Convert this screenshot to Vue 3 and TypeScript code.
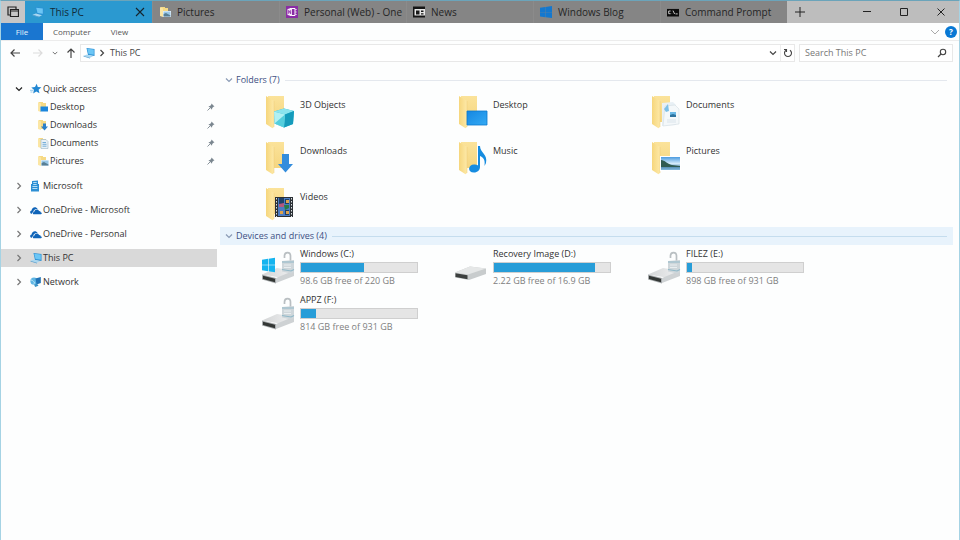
<script setup lang="ts">
import { ref } from 'vue'

interface Tab { id: number; label: string; icon: string }
interface Place { label: string; icon: string; open?: boolean; children?: { label: string; icon: string }[] }
interface Drive { label: string; icon: string; used: number; note: string }

const tabs: Tab[] = [
  { id: 1, label: 'This PC', icon: 'pc' },
  { id: 2, label: 'Pictures', icon: 'mini-pictures' },
  { id: 3, label: 'Personal (Web) - One', icon: 'onenote' },
  { id: 4, label: 'News', icon: 'news' },
  { id: 5, label: 'Windows Blog', icon: 'windows' },
  { id: 6, label: 'Command Prompt', icon: 'cmd' },
]
const activeTab = ref(1)

const places = ref<Place[]>([
  {
    label: 'Quick access', icon: 'star', open: true,
    children: [
      { label: 'Desktop', icon: 'mini-desktop' },
      { label: 'Downloads', icon: 'mini-downloads' },
      { label: 'Documents', icon: 'mini-documents' },
      { label: 'Pictures', icon: 'mini-pictures' },
    ],
  },
  { label: 'Microsoft', icon: 'building' },
  { label: 'OneDrive - Microsoft', icon: 'cloud' },
  { label: 'OneDrive - Personal', icon: 'cloud' },
  { label: 'This PC', icon: 'pc' },
  { label: 'Network', icon: 'network' },
])
const selectedPlace = ref('This PC')

const folders = [
  { label: '3D Objects', icon: 'over-cube' },
  { label: 'Desktop', icon: 'over-desktop' },
  { label: 'Documents', icon: 'over-documents' },
  { label: 'Downloads', icon: 'over-downloads' },
  { label: 'Music', icon: 'over-music' },
  { label: 'Pictures', icon: 'over-pictures' },
  { label: 'Videos', icon: 'over-videos' },
]

const drives: Drive[] = [
  { label: 'Windows (C:)', icon: 'system', used: 54.5, note: '98.6 GB free of 220 GB' },
  { label: 'Recovery Image (D:)', icon: 'plain', used: 87, note: '2.22 GB free of 16.9 GB' },
  { label: 'FILEZ (E:)', icon: 'locked', used: 4, note: '898 GB free of 931 GB' },
  { label: 'APPZ (F:)', icon: 'locked', used: 13, note: '814 GB free of 931 GB' },
]

const search = ref('')
</script>

<template>
  <svg class="sprite" aria-hidden="true">
    <defs>
      <linearGradient id="g-front" x1="0" x2="1"><stop offset="0" stop-color="#f6d67c" /><stop offset="1" stop-color="#fde9a8" /></linearGradient>
      <linearGradient id="g-back" x1="0" x2="0" y1="0" y2="1"><stop offset="0" stop-color="#fbe39a" /><stop offset="1" stop-color="#f5d680" /></linearGradient>
      <linearGradient id="g-blue" x1="0" x2="1" y1="0" y2="1"><stop offset="0" stop-color="#1587e2" /><stop offset="1" stop-color="#34aaf4" /></linearGradient>
      <linearGradient id="g-sky" x1="0" x2="0" y1="0" y2="1"><stop offset="0" stop-color="#4b9be0" /><stop offset=".5" stop-color="#d4ebfa" /><stop offset=".8" stop-color="#5b93b8" /><stop offset="1" stop-color="#86bce0" /></linearGradient>
      <linearGradient id="g-metal" x1="0" x2="1"><stop offset="0" stop-color="#d3d5d6" /><stop offset="1" stop-color="#f0f1f2" /></linearGradient>
    </defs>

    <symbol id="pc" viewBox="0 0 12 12">
      <path d="M3.500 1l8 1v7L5 8z" fill="#2a8fd4" /><path d="M4.200 1.800l6.600.8v5.200l-5.300-.9z" fill="#6cc6f5" />
      <path d="M.5 8.800l3.500-1.300 6 1.700-3 1.600z" fill="#a9d7f1" /><path d="M.5 8.800l6.500 2v.7L.5 9.500z" fill="#5aa2d0" />
    </symbol>
    <symbol id="mini-folder" viewBox="0 0 12 12">
      <path d="M2 1h4v1h3v8H2z" fill="#f6d984" /><path d="M1 1l3 1.400V11L1 10z" fill="#fbe6a4" />
    </symbol>
    <symbol id="mini-desktop" viewBox="0 0 12 12"><use href="#mini-folder" /><path d="M3.500 5.500h7.500v5H3.500z" fill="#1b86dc" /></symbol>
    <symbol id="mini-downloads" viewBox="0 0 12 12"><use href="#mini-folder" /><path d="M6 4.500h3V7.500h2L7.500 11.500 4 7.500h2z" fill="#2a7fca" /></symbol>
    <symbol id="mini-documents" viewBox="0 0 12 12">
      <use href="#mini-folder" /><path d="M4 2.500h5l2 2v7H4z" fill="#e8f1f7" stroke="#9bb5c6" stroke-width=".6" />
      <path d="M5.500 5.500H9M5.500 7.300h4M5.500 9.200h4" stroke="#5a9ed0" stroke-width=".8" />
    </symbol>
    <symbol id="mini-pictures" viewBox="0 0 12 12">
      <use href="#mini-folder" /><path d="M4 5h8v6H4z" fill="#e6f2fa" /><path d="M4.600 5.600h6.800v4.800H4.600z" fill="#9ac8e8" /><path d="M4.600 8l2.400-1 4.400 2.500v.9H4.600z" fill="#587f95" />
    </symbol>
    <symbol id="onenote" viewBox="0 0 12 12">
      <path d="M0 0h12v12H0z" fill="#8a2da5" /><path d="M4 2.500h5v7H4z" fill="none" stroke="#fff" /><path d="M9.500 3.500h1M9.500 6h1M9.500 8.500h1" stroke="#fff" stroke-width="1.200" />
      <path d="M1.500 3L6 2v8L1.500 9z" fill="#f7eafa" /><path d="M2.700 7.800V4.400l2 3.300V4.200" fill="none" stroke="#8a2da5" stroke-width=".9" />
    </symbol>
    <symbol id="news" viewBox="0 0 12 12">
      <path d="M0 .5h12v11H0z" fill="#151515" /><path d="M1.500 3H12v6.500H1.500z" fill="#e6e6e6" /><path d="M3 4.500h3.500V8.500H3zM8 4.500h2.500V6H8zM8 7.300h2.500v1.200H8z" fill="#181818" />
    </symbol>
    <symbol id="windows" viewBox="0 0 12 12">
      <path d="M0 1.800l5.300-.8v5.100H0zM5.600.9L12 0v6.100H5.600zM0 6.300h5.300v5L0 10.500zM5.600 6.300H12V12l-6.400-.7z" fill="#1478cf" />
    </symbol>
    <symbol id="cmd" viewBox="0 0 12 12">
      <path d="M0 2h12v8.500H0z" fill="#0c0c0c" /><path d="M0 2h12v.8H0z" fill="#999" />
      <path d="M3.600 5H1.700v2.700h1.900M4.900 5.200v.1M4.900 7.200v.2M6 4.600l1.600 3.400M8.500 7.900h2.200" fill="none" stroke="#ddd" stroke-width=".9" />
    </symbol>
    <symbol id="star" viewBox="0 0 12 12">
      <path d="M6.700.8l1.100 3.300 3.600.2-2.800 2.400.9 3.600-3.200-1.800-3.100 2.100.7-3.800L1.300 4.600l3.700-.5z" fill="#2187d2" /><path d="M0 7.300h3M.5 9h2" stroke="#6bb5e6" stroke-width=".7" />
    </symbol>
    <symbol id="building" viewBox="0 0 12 12">
      <path d="M2 1l6-.5V4h1v7.500H1V4h1z" fill="#2d8fd4" /><path d="M3.200 2.500h3.500M3.200 4.500h3.500M2.400 6.500h5M2.400 8.500h5" stroke="#c4e5f8" stroke-width=".9" />
    </symbol>
    <symbol id="cloud" viewBox="0 0 12 12">
      <path d="M1.800 9.800C-.5 9.600-.2 6.800 1.600 6.600c0-3.400 4.400-4.600 6-1.600-2.800-.4-4.400 1.400-4.200 3-.8.3-1.300 1.100-1.600 1.800z" fill="#0f64b8" />
      <path d="M3.300 10.200c-1-1-.2-2.300.9-2.300.1-2.500 3.700-3.400 4.800-.9 1.400-.1 1.800.9 1.700 1.400 1.500.1 1.500 1.700.3 1.800z" fill="#0f64b8" />
    </symbol>
    <symbol id="network" viewBox="0 0 12 12">
      <circle cx="4" cy="5.200" r="3.600" fill="#5eb6e4" /><path d="M1 4c2 .1 2 1.600 3.400 2 .2 1-.6 1.500-.4 2.600" fill="none" stroke="#b6e2f5" />
      <path d="M5.500 2.500L10.800 1v6L6.500 8.400z" fill="#2173b6" /><path d="M4 8.400l3-.7 1.500 2-3.300 1.300z" fill="#3a93c6" />
    </symbol>
    <symbol id="pin" viewBox="0 0 8 8">
      <path d="M4.500.5l3 3-1 .3-1.300 1.300-.2 1.600L1.400 3.100l1.700-.2L4.300 1.600z" fill="#7b8790" /><path d="M.5 7.500L3 5" stroke="#7b8790" stroke-width=".9" />
    </symbol>
    <symbol id="chevron-down" viewBox="0 0 8 8"><path d="M1 2.500l3 3 3-3" fill="none" stroke="currentColor" stroke-width="1.200" /></symbol>
    <symbol id="chevron-right" viewBox="0 0 8 8"><path d="M2.500 1l3 3-3 3" fill="none" stroke="currentColor" stroke-width="1.200" /></symbol>

    <symbol id="folder" viewBox="0 0 36 36">
      <path d="M8 2h16v26H8z" fill="url(#g-back)" /><path d="M6 2l8 5v26l-1.500 1.200L6 30z" fill="url(#g-front)" /><path d="M14 7v26" stroke="#eecb74" stroke-width=".5" />
    </symbol>
    <symbol id="over-cube" viewBox="0 0 36 36">
      <path d="M24 14.500l10 2.500-1 13-9 3.500-9.500-4-.5-12z" fill="#27b4ce" /><path d="M14 17.500l10-3 10 2.500-9 3.500z" fill="#8be4ee" /><path d="M14 17.500l11 3-1 13-9.500-4z" fill="#b1f0f3" /><path d="M25 20.500l9-3.500-1 13-9 3.500z" fill="#159bbb" /><path d="M14.500 29.500L25 20.500l-1 13z" fill="#54cedd" />
    </symbol>
    <symbol id="over-desktop" viewBox="0 0 36 36"><path d="M14 17h20v14H14z" fill="url(#g-blue)" stroke="#0b78ce" stroke-width=".8" /></symbol>
    <symbol id="over-documents" viewBox="0 0 36 36">
      <path d="M16 9l11-1 3 3v20l-14 1z" fill="#e8f0f5" /><path d="M19 12l10-1 4 4v15l-16 2z" fill="#f4f8fa" stroke="#d3dde3" stroke-width=".6" />
      <path d="M18 15l4-5 1 7-3 1z" fill="#7cc0e8" /><path d="M24 18h6v5h-6z" fill="#6ab8e5" /><path d="M24 21l3-1 3 1v2h-6z" fill="#2d739f" /><path d="M21 26h9M21 28h9" stroke="#cfdce4" stroke-width=".7" />
    </symbol>
    <symbol id="over-downloads" viewBox="0 0 36 36"><path d="M22 14h7v10h4L25.500 32.500 18 24h4z" fill="#338ddd" /></symbol>
    <symbol id="over-music" viewBox="0 0 36 36">
      <path d="M25 6h2c0 7 8 8 6 17l-1.500 3c1-7-1.500-8.500-4.500-10v11c0 3-2.500 5.500-6 5.500-7 0-6-8 0-8 1.500 0 3 .3 4 1z" fill="#168ce0" />
    </symbol>
    <symbol id="over-pictures" viewBox="0 0 36 36">
      <path d="M14 16h21v15H14z" fill="#fff" /><path d="M15 17h19v13H15z" fill="url(#g-sky)" /><path d="M15 20c4 0 6 4 11 5l8 1v1H15z" fill="#315c52" />
    </symbol>
    <symbol id="over-videos" viewBox="0 0 36 36">
      <path d="M15 11h18v20H15z" fill="#2b3035" /><path d="M18 12h12v18H18z" fill="#4b7cc2" /><path d="M19 12h5v5l-5 3zM25 13h4v5h-4zM25 24h4v5h-4z" fill="#1f4068" />
      <path d="M26 14h3v3h-3zM26 25h3v3h-3zM20 25h3v3h-3z" fill="#dda24c" /><path d="M19 18l5-1v4h-5z" fill="#b5577d" /><path d="M24 19h5v3l-4 2z" fill="#267b49" />
      <path d="M16.500 12v19M31.500 12v19" stroke="#dce2e5" stroke-dasharray="1.500 1.500" />
    </symbol>

    <symbol id="disk" viewBox="0 0 36 36">
      <path d="M2 24.500L17 18l17 2.500-14 7z" fill="url(#g-metal)" /><path d="M16 28l18-7.500V26l-18 7z" fill="#ced2d4" /><path d="M2 24.500L16 28v5.500L2 29.500z" fill="#a9adaf" /><path d="M3 25.700l12 3v3.600L3 28.900z" fill="#333735" />
    </symbol>
    <symbol id="drive-plain" viewBox="0 0 36 36">
      <path d="M2 22.500L17 16.500l16 2v5.500l-17 6L2 27.500z" fill="#c8cccd" /><path d="M2 22.500L17 16.500l16 2-18 6z" fill="#e5e7e7" /><path d="M2.500 23.300l12 2v4L2.500 27z" fill="#3c403f" />
    </symbol>
    <symbol id="drive-locked" viewBox="0 0 36 36">
      <use href="#disk" />
      <path d="M30.500 12V6c0-4.500-6-4.500-6 0v2" fill="none" stroke="#b9bfc2" stroke-width="1.700" /><path d="M22 11l12-1v12l-3 1.500-9-2z" fill="#ced6da" /><path d="M22 12h12M22 19.500l9 1.500 3-1.500" fill="none" stroke="#8fb8c8" stroke-width="1.200" /><path d="M24 15h7M24 17.500h7" stroke="#e9eef0" />
    </symbol>
    <symbol id="drive-system" viewBox="0 0 36 36">
      <use href="#drive-locked" /><path d="M2 9.700L8 8.800v5.900H2zM8.600 8.700l6.400-1v7H8.600zM2 15.300h6v5.900l-6-.9zM8.600 15.300H15v7l-6.400-1z" fill="#16b4ef" />
    </symbol>
  </svg>

  <div class="window">
    <header class="tabbar">
      <button class="stack" aria-label="Show all tabs">
        <svg viewBox="0 0 12 12"><path d="M3 9H1V1h8v2M3.500 3.500h8v7h-8zM3 5h9" fill="none" stroke="#222" stroke-width="1.200" /></svg>
      </button>
      <div v-for="tab in tabs" :key="tab.id" class="tab" :class="{ active: tab.id === activeTab }">
        <button class="tab-label" @click="activeTab = tab.id">
          <svg class="icon"><use :href="'#' + tab.icon" /></svg><span>{{ tab.label }}</span>
        </button>
        <button v-if="tab.id === activeTab" class="tab-close" aria-label="Close tab">
          <svg viewBox="0 0 10 10"><path d="M1 1l8 8M9 1L1 9" stroke="#15252e" stroke-width="1.100" /></svg>
        </button>
      </div>
      <button class="new-tab" aria-label="New tab"><svg viewBox="0 0 10 10"><path d="M5 0v10M0 5h10" stroke="#222" /></svg></button>
      <div class="caption">
        <button aria-label="Minimize"><svg viewBox="0 0 10 10"><path d="M1 4.500h8" stroke="#222" /></svg></button>
        <button aria-label="Maximize"><svg viewBox="0 0 10 10"><path d="M1.500 1.500h7v7h-7z" fill="none" stroke="#222" /></svg></button>
        <button aria-label="Close"><svg viewBox="0 0 10 10"><path d="M1.500 1.500l7 7M8.500 1.500l-7 7" stroke="#222" /></svg></button>
      </div>
    </header>

    <nav class="ribbon" aria-label="Ribbon">
      <button class="file">File</button>
      <button>Computer</button>
      <button>View</button>
      <button class="expand" aria-label="Expand ribbon"><svg viewBox="0 0 10 10"><path d="M1 3l4 4 4-4" fill="none" stroke="#aaa" /></svg></button>
      <button class="help" aria-label="Help">?</button>
    </nav>

    <div class="address-row">
      <button class="nav" aria-label="Back"><svg viewBox="0 0 10 10"><path d="M10 5H1M4.500 1.500L1 5l3.500 3.500" fill="none" stroke="#444" stroke-width="1.200" /></svg></button>
      <button class="nav" aria-label="Forward" disabled><svg viewBox="0 0 10 10"><path d="M0 5h9M5.500 1.500L9 5 5.500 8.500" fill="none" stroke="#dcdcdc" stroke-width="1.200" /></svg></button>
      <button class="recent" aria-label="Recent locations"><svg><use href="#chevron-down" /></svg></button>
      <button class="nav up" aria-label="Up"><svg viewBox="0 0 10 10"><path d="M5 10V1M1.500 4.500L5 1l3.500 3.500" fill="none" stroke="#444" stroke-width="1.200" /></svg></button>
      <div class="address">
        <svg class="icon"><use href="#pc" /></svg>
        <svg class="chev"><use href="#chevron-right" /></svg>
        <a class="crumb" href="#this-pc">This PC</a>
        <button class="drop" aria-label="Previous locations"><svg class="chev"><use href="#chevron-down" /></svg></button>
        <button class="refresh" aria-label="Refresh">
          <svg viewBox="0 0 10 10"><path d="M7 2.200A3.500 3.500 0 1 1 3 2.200M1 1.500h2.500V4" fill="none" stroke="#444" stroke-width="1.100" /></svg>
        </button>
      </div>
      <label class="search">
        <input v-model="search" type="text" placeholder="Search This PC" aria-label="Search This PC" />
        <svg viewBox="0 0 10 10"><circle cx="6" cy="4" r="2.700" fill="none" stroke="#444" stroke-width="1.100" /><path d="M4 6L1 9" stroke="#444" stroke-width="1.300" /></svg>
      </label>
    </div>

    <div class="body">
      <nav class="sidebar" aria-label="Locations">
        <div v-for="place in places" :key="place.label">
          <div class="place" :class="{ selected: place.label === selectedPlace }">
            <button class="toggle" :class="{ open: place.open }" :aria-label="'Toggle ' + place.label" @click="place.open = !place.open">
              <svg class="chev"><use :href="place.open ? '#chevron-down' : '#chevron-right'" /></svg>
            </button>
            <a href="#" @click.prevent="selectedPlace = place.label"><svg class="icon"><use :href="'#' + place.icon" /></svg>{{ place.label }}</a>
          </div>
          <ul v-if="place.children && place.open">
            <li v-for="child in place.children" :key="child.label">
              <a href="#" @click.prevent><svg class="icon"><use :href="'#' + child.icon" /></svg>{{ child.label }}</a>
              <svg class="chev"><use href="#pin" /></svg>
            </li>
          </ul>
        </div>
      </nav>

      <main class="content">
        <section>
          <h2><svg class="chev"><use href="#chevron-down" /></svg>Folders (7)</h2>
          <div class="grid">
            <a v-for="folder in folders" :key="folder.label" href="#" class="item" @click.prevent>
              <svg class="large"><use href="#folder" /><use :href="'#' + folder.icon" /></svg>
              <span class="folder-name">{{ folder.label }}</span>
            </a>
          </div>
        </section>
        <section>
          <h2 class="hover"><svg class="chev"><use href="#chevron-down" /></svg>Devices and drives (4)</h2>
          <div class="grid">
            <a v-for="drive in drives" :key="drive.label" href="#" class="item" @click.prevent>
              <svg class="large"><use :href="'#drive-' + drive.icon" /></svg>
              <span class="drive-info">
                <span>{{ drive.label }}</span>
                <span class="bar" role="meter" :aria-valuenow="drive.used" aria-valuemin="0" aria-valuemax="100" :aria-label="drive.label"><span class="fill" :style="{ width: drive.used + '%' }"></span></span>
                <span class="note">{{ drive.note }}</span>
              </span>
            </a>
          </div>
        </section>
      </main>
    </div>
  </div>
</template>

<style>
body { background: #fff; }
</style>

<style scoped>
* { box-sizing: border-box; }
.sprite { position: absolute; width: 0; height: 0; }
.window {
  display: flex; flex-direction: column; min-height: 100vh;
  border: 1px solid #a5d3e4; border-top-color: #6ba4ba; border-bottom: 0;
  background: #fdfefe; color: #333;
  font: 9px/12px "Open Sans", "Noto Sans", sans-serif;
}
button { display: flex; align-items: center; justify-content: center; padding: 0; border: 0; background: none; color: inherit; font: inherit; }
a { color: inherit; text-decoration: none; }
svg { display: block; flex: none; width: 10px; height: 10px; }
.icon { width: 12px; height: 12px; }
.chev { width: 8px; height: 8px; }

.tabbar { display: flex; height: 22px; background: #bdbdbd; font-size: 10px; }
.stack { width: 24px; background: #c6c6c6; }
.stack svg { width: 12px; height: 12px; }
.tab { display: flex; flex: 0 1 127px; min-width: 0; background: #858585; border-left: 1px solid #8b8b8b; color: #262626; }
.tab.active { background: #2b99d0; border-color: #2b99d0; color: #122c3a; }
.tab-label { flex: 1; min-width: 0; justify-content: flex-start; gap: 6px; padding-left: 6px; white-space: nowrap; overflow: hidden; }
.tab-close { width: 24px; }
.new-tab { width: 25px; }
.caption { display: flex; margin-left: auto; }
.caption button { width: 37px; }

.ribbon { display: flex; align-items: stretch; height: 18px; padding-right: 2px; border-bottom: 1px solid #ececec; color: #555; font-size: 8px; }
.ribbon button { padding: 0 10px; }
.ribbon .file { width: 42px; background: #1a76d0; color: #e4f1fc; }
.ribbon .expand { margin-left: auto; padding: 0 5px; }
.ribbon .help { align-self: center; width: 12px; height: 12px; padding: 0; border-radius: 50%; background: #0878d4; color: #fff; font-weight: 700; }

.address-row { display: flex; align-items: center; padding: 3px 6px 0 5px; }
.nav { width: 18px; }
.nav + .nav { margin-left: 5px; }
.recent { width: 16px; color: #666; }
.recent svg { width: 6px; height: 6px; }
.nav.up { width: 15px; }
.address, .search { display: flex; align-items: center; height: 18px; border: 1px solid #e8e8e8; background: #fff; }
.address { flex: 1; margin: 0 4px 0 2px; padding-left: 2px; color: #444; }
.address .chev { margin: 0 3px; }
.drop { margin-left: auto; }
.refresh { width: 14px; height: 100%; border-left: 1px solid #eee; }
.crumb { margin-left: 1px; }
.search { width: 154px; padding: 0 5px; }
.search input { flex: 1; min-width: 0; padding: 0; border: 0; outline: 0; background: none; font: inherit; color: #333; }
.search input::placeholder { color: #777; opacity: 1; }

.body { display: flex; flex: 1; padding-right: 6px; }
.sidebar { display: flex; flex-direction: column; gap: 6px; flex: none; width: 216px; padding-top: 18px; }
.sidebar ul { margin: 0; padding: 0 0 1px; list-style: none; }
.place, .sidebar li { display: flex; align-items: center; height: 18px; }
.place { padding-left: 13px; }
.place.selected { background: #d9d9d9; }
.toggle { width: 10px; height: 10px; margin-right: 6px; color: #777; }
.toggle.open { color: #222; }
.sidebar a { display: flex; align-items: center; flex: 1; gap: 1px; white-space: nowrap; }
.sidebar li { padding: 0 2px 0 36px; }

.content { flex: 1; min-width: 0; padding: 9px 0 0 3px; }
h2 { display: flex; align-items: center; gap: 3px; height: 18px; margin: 0; padding: 0 6px 0 5px; color: #3d4f83; font: inherit; }
h2 .chev { color: #8a9bb5; }
h2::after { content: ""; flex: 1; height: 1px; margin-left: 2px; background: #e4e8ee; }
h2.hover { background: #e8f3fc; }
h2.hover::after { background: #c5ddee; }
.grid { display: grid; grid-template-columns: repeat(auto-fill, 193px); padding-left: 40px; }
.item { display: flex; gap: 4px; height: 46px; }
.large { align-self: center; width: 36px; height: 36px; }
.folder-name { padding-top: 10px; }
.drive-info { display: flex; flex-direction: column; gap: 2px; padding-top: 3px; white-space: nowrap; }
.bar { width: 118px; height: 11px; border: 1px solid #cfcfcf; background: #e5e5e5; }
.fill { display: block; height: 100%; background: #279dd8; }
.note { color: #808080; }
</style>
